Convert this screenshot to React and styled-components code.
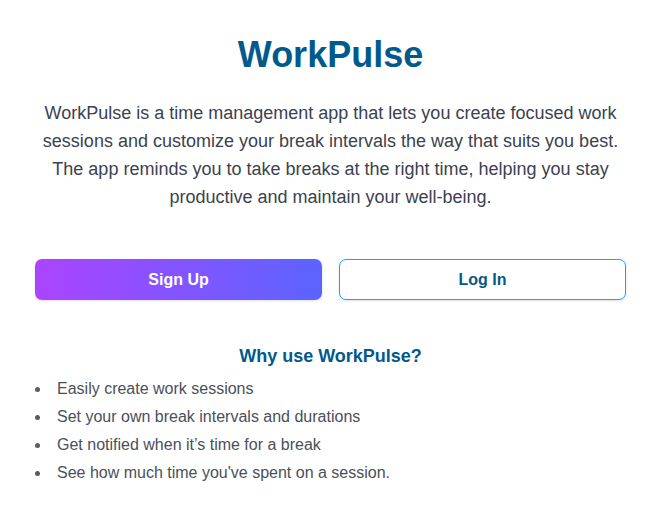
import React from "react";
import styled, { createGlobalStyle } from "styled-components";

const GlobalStyle = createGlobalStyle`
  body {
    margin: 0;
    background: #ffffff;
    font-family: "Liberation Sans", Arial, sans-serif;
  }
`;

const features = [
  "Easily create work sessions",
  "Set your own break intervals and durations",
  "Get notified when it\u2019s time for a break",
  "See how much time you've spent on a session.",
];

const App = () => {
  return (
    <Page>
      <GlobalStyle />
      <Title>WorkPulse</Title>
      <Intro>
        WorkPulse is a time management app that lets you create focused work
        sessions and customize your break intervals the way that suits you
        best. The app reminds you to take breaks at the right time, helping you
        stay productive and maintain your well-being.
      </Intro>
      <Actions>
        <Button primary>Sign Up</Button>
        <Button>Log In</Button>
      </Actions>
      <Subtitle>Why use WorkPulse?</Subtitle>
      <Features>
        {features.map((item) => (
          <Feature key={item}>{item}</Feature>
        ))}
      </Features>
    </Page>
  );
};

const Page = styled.div`
  box-sizing: border-box;
  width: 100%;
  padding: 34px 33px 30px 35px;
`;

const Title = styled.h1`
  margin: 0;
  font-size: 36px;
  line-height: 41px;
  font-weight: bold;
  color: #02598b;
  text-align: center;
`;

const Intro = styled.p`
  margin: 24px 0 0;
  font-size: 18px;
  line-height: 28px;
  color: #3b4250;
  text-align: center;
`;

const Actions = styled.div`
  display: grid;
  grid-template-columns: 1fr 1fr;
  gap: 17px;
  margin-top: 48px;
`;

const Button = styled.button`
  height: 41px;
  border-radius: 7px;
  font-family: "Liberation Sans", Arial, sans-serif;
  font-size: 16px;
  font-weight: bold;
  cursor: pointer;
  box-shadow: 0 1px 3px rgba(0, 0, 0, 0.12);
  border: ${(p) => (p.primary ? "none" : "1px solid #12a6f3")};
  background: ${(p) =>
    p.primary ? "linear-gradient(90deg, #ab44ff 0%, #5b64ff 100%)" : "#ffffff"};
  color: ${(p) => (p.primary ? "#ffffff" : "#02598b")};
`;

const Subtitle = styled.h2`
  margin: 46px 0 0;
  font-size: 18px;
  line-height: 21px;
  font-weight: bold;
  color: #02598b;
  text-align: center;
`;

const Features = styled.ul`
  margin: 8px 0 0;
  padding: 0;
  list-style: none;
  color: #4a505a;
  font-size: 16px;
  line-height: 28px;
`;

const Feature = styled.li`
  display: flex;
  align-items: center;

  &::before {
    content: "";
    flex-shrink: 0;
    width: 5px;
    height: 5px;
    margin: 1px 17px 0 0;
    border-radius: 50%;
    background: #595e66;
  }
`;

export default App;
